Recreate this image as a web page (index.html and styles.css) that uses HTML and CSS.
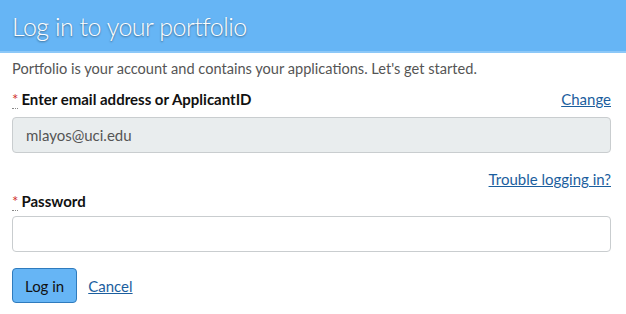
FILE: index.html
```html
<!DOCTYPE html>
<html lang="en">
<head>
    <meta charset="UTF-8">
    <meta name="viewport" content="width=device-width, initial-scale=1.0">
    <title>Log in to your portfolio</title>
    <link rel="stylesheet" href="styles.css">
</head>
<body>
    <div class="dialog">
        <div class="dialog-header">
            <h1>Log in to your portfolio</h1>
        </div>
        <div class="dialog-body">
            <p class="intro">Portfolio is your account and contains your applications. Let's get started.</p>
            <div class="field">
                <div class="field-head">
                    <label for="email"><abbr title="required">*</abbr>Enter email address or ApplicantID</label>
                    <a href="#">Change</a>
                </div>
                <input id="email" class="text-input readonly" type="text" value="mlayos@uci.edu" readonly>
            </div>
            <div class="trouble"><a href="#">Trouble logging in?</a></div>
            <div class="field field-password">
                <div class="field-head">
                    <label for="password"><abbr title="required">*</abbr>Password</label>
                </div>
                <input id="password" class="text-input" type="password">
            </div>
            <div class="actions">
                <button class="btn-primary">Log in</button>
                <a href="#">Cancel</a>
            </div>
        </div>
    </div>
</body>
</html>
```

FILE: styles.css
```css
body {
    font-family: Lato, "Open Sans", sans-serif;
    margin: 0;
    padding: 0;
    background: #fff;
    color: #222;
}
.dialog-header {
    background: #66b5f5;
    border-bottom: 2px solid #8cc8f8;
    height: 51px;
    display: flex;
    align-items: center;
    padding: 0 12px;
}
.dialog-header h1 {
    margin: 0;
    font-size: 25px;
    font-weight: 300;
    color: #fff;
    text-shadow: 0 1px 2px rgba(0, 0, 0, 0.45);
    letter-spacing: -0.5px;
}
.dialog-body {
    padding: 0 15px 0 12px;
}
.intro {
    margin: 5px 0 0;
    font-size: 14.6px;
    color: #555;
    line-height: 22px;
}
.field {
    margin-top: 10px;
}
.field-head {
    display: flex;
    justify-content: space-between;
    align-items: baseline;
    height: 22px;
    margin-bottom: 5px;
}
.field-password .field-head {
    margin-bottom: 2px;
}
label {
    font-weight: 700;
    font-size: 15px;
    color: #111;
}
abbr {
    color: #d0312d;
    text-decoration: none;
    border-bottom: 1px dotted #888;
    font-weight: 400;
    margin-right: 3px;
}
a {
    color: #1b5e9e;
    font-size: 15px;
    text-decoration: underline;
}
.text-input {
    display: block;
    box-sizing: border-box;
    width: 100%;
    height: 36px;
    border: 1px solid #c9cdcf;
    border-radius: 4px;
    padding: 0 13px;
    font-family: inherit;
    font-size: 15px;
    color: #555;
    background: #fff;
}
.text-input.readonly {
    background: #e9edee;
}
.trouble {
    text-align: right;
    margin-top: 15px;
    line-height: 22px;
}
.field + .trouble + .field {
    margin-top: 2px;
}
.actions {
    display: flex;
    align-items: center;
    gap: 11px;
    margin-top: 16px;
}
.btn-primary {
    background: #66b5f5;
    border: 1px solid #2f7bbd;
    border-radius: 4px;
    height: 35px;
    padding: 0 12px;
    font-family: inherit;
    font-size: 15px;
    color: #111;
}
```
